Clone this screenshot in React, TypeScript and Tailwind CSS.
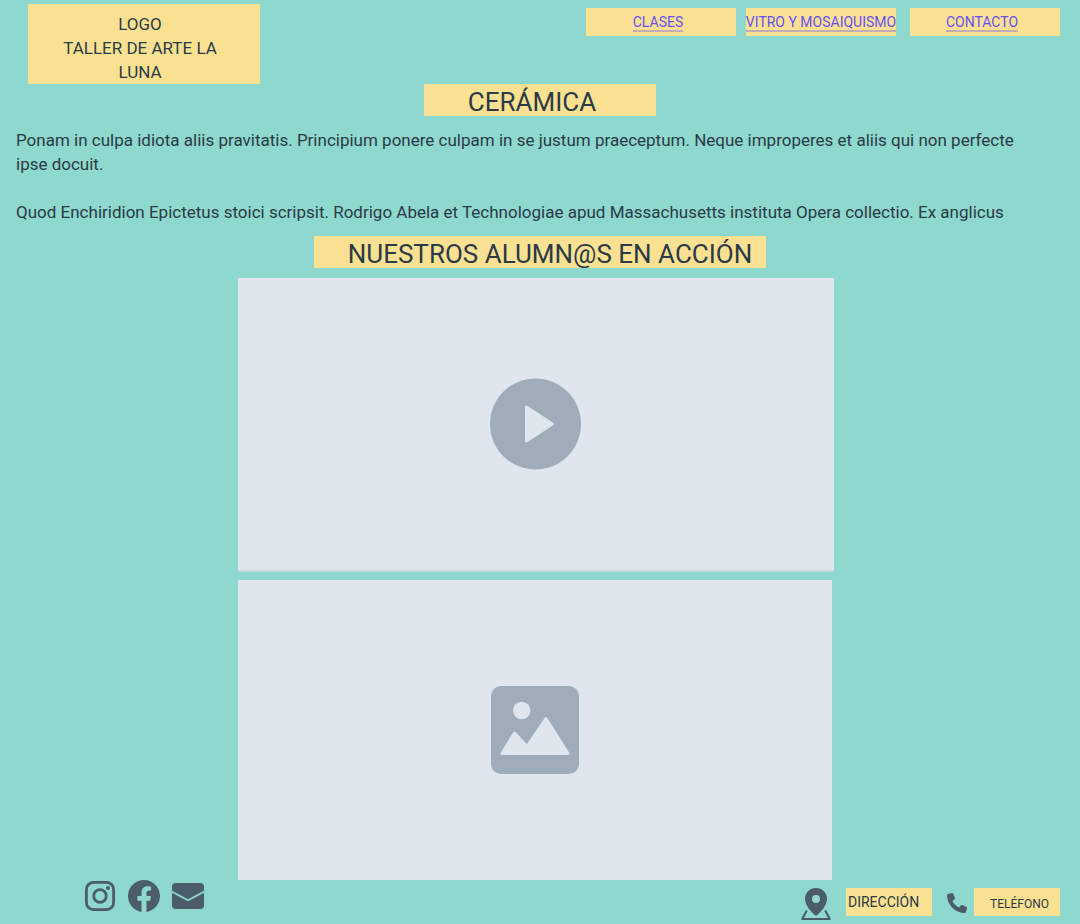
import type { ReactNode } from "react";

const navLinks = [
  { label: "CLASES", href: "#clases", box: "pr-1.5" },
  { label: "VITRO Y MOSAIQUISMO", href: "#vitro", box: "mr-1" },
  { label: "CONTACTO", href: "#contacto", box: "pr-1.5" },
];

function Banner({ className, children }: { className: string; children: ReactNode }) {
  return (
    <h2 className={`mx-auto flex h-8 items-center justify-center bg-[#fae192] pt-1 text-[26px] leading-8 whitespace-nowrap ${className}`}>
      {children}
    </h2>
  );
}

function PlayIcon() {
  return (
    <svg width="92" height="92" viewBox="0 0 92 92" aria-hidden="true">
      <circle cx="45.5" cy="46" r="45.5" fill="#9eadb9" />
      <path d="M36.5 29 L62.3 46 L36.5 63 Z" fill="#dfe6ee" stroke="#dfe6ee" strokeWidth="3" strokeLinejoin="round" />
    </svg>
  );
}

function PictureIcon() {
  return (
    <svg width="88" height="88" viewBox="0 0 88 88" aria-hidden="true">
      <rect width="88" height="88" rx="10" fill="#9eadb9" />
      <circle cx="30.7" cy="24.5" r="8.7" fill="#dfe6ee" />
      <path d="M11 67.5 L23.5 47 L36 60.5 L55 32.5 L77 67.5 Z" fill="#dfe6ee" stroke="#dfe6ee" strokeWidth="3" strokeLinejoin="round" />
    </svg>
  );
}

function InstagramIcon() {
  return (
    <svg width="32" height="32" viewBox="0 0 32 32" fill="none" stroke="#4b5d6b" aria-hidden="true">
      <rect x="2.4" y="2.4" width="27.2" height="27.2" rx="7" strokeWidth="2.8" />
      <circle cx="16" cy="16" r="6.3" strokeWidth="2.8" />
      <circle cx="24" cy="8" r="2" fill="#4b5d6b" stroke="none" />
    </svg>
  );
}

function FacebookIcon() {
  return (
    <svg width="32" height="32" viewBox="0 0 32 32" aria-hidden="true">
      <path
        fill="#4b5d6b"
        d="M32 16.1C32 7.2 24.8 0 16 0S0 7.2 0 16.1c0 8 5.9 14.7 13.5 15.9V20.8H9.4v-4.7h4.1v-3.5c0-4 2.4-6.3 6-6.3 1.8 0 3.6.3 3.6.3v4h-2c-2 0-2.6 1.2-2.6 2.5v3h4.4l-.7 4.7h-3.7V32C26.1 30.8 32 24.1 32 16.1Z"
      />
    </svg>
  );
}

function MailIcon() {
  return (
    <svg width="32" height="26" viewBox="0 0 32 26" fill="#4b5d6b" aria-hidden="true">
      <path d="M3.5 0h25A3.5 3.5 0 0 1 32 3.5v4.2L16 16.3 0 7.7V3.5A3.5 3.5 0 0 1 3.5 0Z" />
      <path d="M0 9.7l16 8.6 16-8.6v12.8a3.5 3.5 0 0 1-3.5 3.5h-25A3.5 3.5 0 0 1 0 22.5Z" />
    </svg>
  );
}

function MapPinIcon() {
  return (
    <svg width="30" height="32" viewBox="0 0 30 32" aria-hidden="true">
      <path
        fill="#4b5d6b"
        fillRule="evenodd"
        d="M15 0C8.9 0 4 4.7 4 10.7 4 17.5 10.5 24.5 15 28c4.5-3.5 11-10.5 11-17.3C26 4.7 21.1 0 15 0Zm0 7a4 4 0 1 1 0 8 4 4 0 0 1 0-8Z"
      />
      <path d="M5.8 22.5 1.2 31h27.6l-4.6-8.5" fill="none" stroke="#4b5d6b" strokeWidth="2" strokeLinejoin="round" />
    </svg>
  );
}

function PhoneIcon() {
  return (
    <svg width="20" height="20" viewBox="0 0 20 20" aria-hidden="true">
      <path
        fill="#4b5d6b"
        d="M6.1.5 7.9 4.7c.2.6.1 1.1-.3 1.5L5.5 8c1.3 2.9 3.6 5.2 6.5 6.5l1.8-2.1c.4-.4.9-.5 1.5-.3l4.2 1.8c.5.2.7.7.5 1.2l-1 4c-.1.5-.5.9-1 .9C8.1 20 0 11.9 0 2c0-.5.4-.9.9-1l4-1c.5-.1 1 .1 1.2.5Z"
      />
    </svg>
  );
}

export default function App() {
  return (
    <div className="min-h-screen bg-[#8ed8cd] font-['Roboto',sans-serif] text-[#2b3a47]">
      <header className="flex items-start justify-between pt-1 pr-5 pl-7">
        <h1 className="w-[232px] bg-[#fae192] pt-2 pr-2 text-center text-[17px] leading-6">
          LOGO
          <br />
          TALLER DE ARTE LA
          <br />
          LUNA
        </h1>
        <nav aria-label="Principal" className="flex gap-2.5 pt-1">
          {navLinks.map((link) => (
            <div key={link.label} className={`flex h-7 w-[150px] justify-center bg-[#fae192] ${link.box}`}>
              <a
                href={link.href}
                className="h-6 border-b-2 border-[#c1aeb7] pt-1 text-sm leading-5 whitespace-nowrap text-[#6650f5]"
              >
                {link.label}
              </a>
            </div>
          ))}
        </nav>
      </header>

      <main>
        <Banner className="w-[232px] pr-4">CERÁMICA</Banner>
        <div className="px-4 py-3 text-[17px] leading-6">
          <p>
            Ponam in culpa idiota aliis pravitatis. Principium ponere culpam in se justum praeceptum. Neque improperes et
            aliis qui non perfecte
            <br />
            ipse docuit.
          </p>
          <p className="pt-6">
            Quod Enchiridion Epictetus stoici scripsit. Rodrigo Abela et Technologiae apud Massachusetts instituta Opera
            collectio. Ex anglicus
          </p>
        </div>
        <Banner className="w-[452px] pl-5">NUESTROS ALUMN@S EN ACCIÓN</Banner>

        <div className="mx-auto flex w-full max-w-[604px] flex-col items-start gap-2 pt-2.5">
          <button
            type="button"
            aria-label="Reproducir video"
            className="flex h-[294px] w-full max-w-[596px] items-center justify-center border-b-2 border-[#c5dadd] bg-[#dfe6ee]"
          >
            <PlayIcon />
          </button>
          <div
            role="img"
            aria-label="Imagen"
            className="flex h-[300px] w-full max-w-[594px] items-center justify-center bg-[#dfe6ee]"
          >
            <PictureIcon />
          </div>
        </div>
      </main>

      <footer className="flex items-start justify-between pr-5 pl-[84px]">
        <div className="flex items-center gap-3">
          <a href="#instagram" aria-label="Instagram">
            <InstagramIcon />
          </a>
          <a href="#facebook" aria-label="Facebook">
            <FacebookIcon />
          </a>
          <a href="#correo" aria-label="Correo">
            <MailIcon />
          </a>
        </div>
        <address className="flex items-start pt-2 not-italic">
          <MapPinIcon />
          <span className="ml-[15px] h-7 w-[86px] bg-[#fae192] pl-0.5 text-sm leading-7">DIRECCIÓN</span>
          <span className="ml-[15px] flex h-7 items-center pt-0.5">
            <PhoneIcon />
          </span>
          <span className="ml-[7px] h-7 w-[86px] bg-[#fae192] pt-0.5 pl-4 text-xs leading-7">TELÉFONO</span>
        </address>
      </footer>
    </div>
  );
}
